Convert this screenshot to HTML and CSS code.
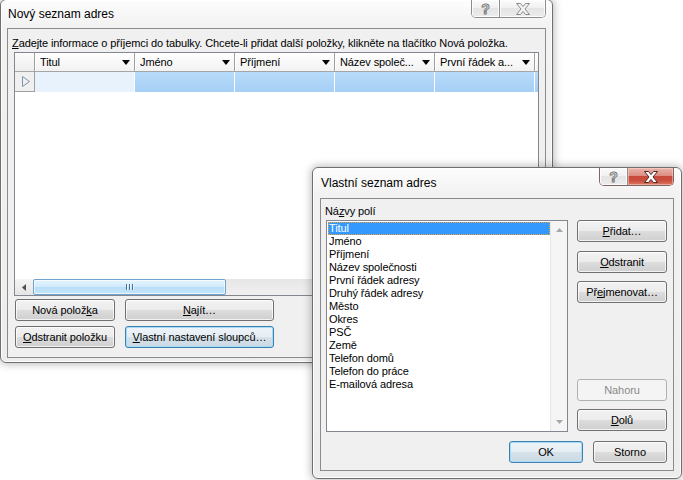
FILE: index.html
```html
<!DOCTYPE html>
<html lang="cs">
<head>
<meta charset="utf-8">
<title>Nový seznam adres</title>
<link rel="stylesheet" href="styles.css">
</head>
<body>
<div class="desk">
  <section class="win win1">
    <div class="cap">
      <span class="cap-title">Nový seznam adres</span>
      <div class="capbtns">
        <span class="cb cb-help">?</span>
        <span class="cb cb-close"><svg width="14" height="12" viewBox="0 0 14 12"><path d="M0.5 0.5H4.5L7 3.6L9.5 0.5H13.5L9 6L13.5 11.5H9.5L7 8.4L4.5 11.5H0.5L5 6Z"/></svg></span>
      </div>
    </div>
    <div class="client c1">
      <p class="hint"><u>Z</u>adejte informace o příjemci do tabulky. Chcete-li přidat další položky, klikněte na tlačítko Nová položka.</p>
      <div class="grid">
        <div class="grow ghead">
          <div class="rh"></div>
          <div class="hc"><span>Titul</span><i class="dd"></i></div>
          <div class="hc"><span>Jméno</span><i class="dd"></i></div>
          <div class="hc"><span>Příjmení</span><i class="dd"></i></div>
          <div class="hc"><span>Název společ...</span><i class="dd"></i></div>
          <div class="hc"><span>První řádek a...</span><i class="dd"></i></div>
          <div class="hc"></div>
        </div>
        <div class="grow gdata">
          <div class="rh"><svg width="10" height="11" viewBox="0 0 10 11"><path d="M1.5 0.5V10.5L8.5 5.5Z"/></svg></div>
          <div class="dc cur"></div>
          <div class="dc"></div>
          <div class="dc"></div>
          <div class="dc"></div>
          <div class="dc"></div>
          <div class="dc"></div>
        </div>
        <div class="gempty"></div>
        <div class="hscroll">
          <span class="sb-arrow"><svg width="5" height="7" viewBox="0 0 5 7"><path d="M4 0V7L0 3.5Z"/></svg></span>
          <span class="sb-thumb"><i></i><i></i><i></i></span>
          <span class="sb-track"></span>
        </div>
      </div>
      <div class="btns1">
        <div class="btn">Nová polož<u>k</u>a</div>
        <div class="btn"><u>N</u>ajít…</div>
        <div class="btn"><u>O</u>dstranit položku</div>
        <div class="btn focus"><u>V</u>lastní nastavení sloupců…</div>
      </div>
    </div>
  </section>

  <section class="win win2">
    <div class="cap">
      <span class="cap-title">Vlastní seznam adres</span>
      <div class="capbtns">
        <span class="cb cb-help">?</span>
        <span class="cb cb-close red"><svg width="14" height="12" viewBox="0 0 14 12"><path d="M0.5 0.5H4.5L7 3.6L9.5 0.5H13.5L9 6L13.5 11.5H9.5L7 8.4L4.5 11.5H0.5L5 6Z"/></svg></span>
      </div>
    </div>
    <div class="client c2">
      <div class="lbl">Ná<u>z</u>vy polí</div>
      <div class="lb">
        <div class="lb-items">
          <div class="lb-item sel">Titul</div>
          <div class="lb-item">Jméno</div>
          <div class="lb-item">Příjmení</div>
          <div class="lb-item">Název společnosti</div>
          <div class="lb-item">První řádek adresy</div>
          <div class="lb-item">Druhý řádek adresy</div>
          <div class="lb-item">Město</div>
          <div class="lb-item">Okres</div>
          <div class="lb-item">PSČ</div>
          <div class="lb-item">Země</div>
          <div class="lb-item">Telefon domů</div>
          <div class="lb-item">Telefon do práce</div>
          <div class="lb-item">E-mailová adresa</div>
        </div>
        <div class="lb-sb">
          <svg width="7" height="4" viewBox="0 0 7 4"><path d="M0 4H7L3.5 0Z"/></svg>
          <svg width="7" height="4" viewBox="0 0 7 4"><path d="M0 0H7L3.5 4Z"/></svg>
        </div>
      </div>
      <div class="rbtns">
        <div class="btn"><u>P</u>řidat…</div>
        <div class="btn b-odst"><u>O</u>dstranit</div>
        <div class="btn b-prej">Př<u>e</u>jmenovat…</div>
        <div class="btn disabled b-nah">Nahoru</div>
        <div class="btn b-dol"><u>D</u>olů</div>
      </div>
      <div class="okrow">
        <div class="btn focus">OK</div>
        <div class="btn">Storno</div>
      </div>
    </div>
  </section>
</div>
</body>
</html>
```

FILE: styles.css
```css
* { box-sizing: border-box; margin: 0; padding: 0; }
html, body { width: 683px; height: 480px; overflow: hidden; background: #fff; }
body {
  font-family: "Liberation Sans", Arial, sans-serif;
  font-size: 11px;
  letter-spacing: -0.1px;
  line-height: 13px;
  color: #000;
}
u { text-decoration: underline; text-underline-offset: 1px; }

.desk { position: relative; width: 683px; height: 480px; overflow: hidden; background: #fff; }

/* windows on the desktop */
.win {
  position: absolute;
  display: flex;
  flex-direction: column;
  border: 1px solid #6f6f6f;
  border-radius: 6px;
  background: linear-gradient(#fdfdfd 0, #f2f2f2 26px, #ededed 100%);
  box-shadow: 0 0 9px 1px rgba(0, 0, 0, .28), inset 0 0 0 1px rgba(255, 255, 255, .85);
}
.win1 { left: 0; top: -1px; width: 553px; height: 364px; padding: 0 6px 4px; }
.win2 { left: 312px; top: 167px; width: 370px; height: 312px; padding: 0 7px 7px; }

.cap { display: flex; align-items: flex-start; flex: none; }
.win1 .cap { height: 28px; }
.win2 .cap { height: 30px; }
.cap-title { font-size: 12px; letter-spacing: 0; padding-left: 1px; white-space: nowrap; }
.win1 .cap-title { line-height: 29px; }
.win2 .cap-title { line-height: 30px; }

.capbtns {
  margin-left: auto;
  display: flex;
  height: 18px;
  border: 1px solid #8d8d8d;
  border-top: none;
  border-radius: 0 0 5px 5px;
  overflow: hidden;
}
.cb {
  display: flex;
  align-items: center;
  justify-content: center;
  background: linear-gradient(#fbfbfb, #f0f0f0 50%, #e4e4e4 50%, #ececec);
  box-shadow: inset 0 0 0 1px rgba(255, 255, 255, .8);
}
.cb-help {
  width: 27px;
  font: bold 14px "Liberation Sans", Arial, sans-serif;
  letter-spacing: 0;
  color: #fdfdfd;
  -webkit-text-stroke: 1px #7c7c7c;
  padding-top: 1px;
}
.cb-close { width: 46px; border-left: 1px solid #8d8d8d; }
.cb-close svg path { fill: #f4f4f4; stroke: #8a8a8a; stroke-width: 1; }
.cb-close.red {
  background: linear-gradient(#eab4ab 0, #dd8d82 45%, #c84a3d 50%, #c9503f 75%, #de7a66 100%);
  box-shadow: inset 0 0 0 1px rgba(255, 220, 210, .5);
}
.cb-close.red svg path { fill: #fff; stroke: #4a2a26; }
.win2 .capbtns { border-color: #7e6664; }

/* client areas */
.client {
  flex: 1;
  background: #f0f0f0;
  border: 1px solid #8b8b8b;
}
.c1 { display: flex; flex-direction: column; padding: 8px 6px 9px; }
.hint { margin: 0 0 2px -2px; white-space: nowrap; height: 13px; }

/* data grid */
.grid {
  height: 244px;
  flex: none;
  border: 1px solid #828790;
  background: #fff;
  display: flex;
  flex-direction: column;
  overflow: hidden;
}
.grow { display: flex; flex: none; }
.ghead { height: 19px; border-bottom: 1px solid #a5a5a5; }
.rh { width: 20px; flex: none; border-right: 1px solid #a0a0a0; background: linear-gradient(#fcfcfc, #eeeeee); }
.hc {
  width: 100px;
  flex: none;
  display: flex;
  align-items: center;
  justify-content: space-between;
  padding: 0 4px 0 5px;
  border-right: 1px solid #a0a0a0;
  box-shadow: inset 1px 0 0 #fff;
  background: linear-gradient(#ffffff, #f2f2f2);
  white-space: nowrap;
}
.hc span { overflow: hidden; }
.dd {
  width: 0;
  height: 0;
  flex: none;
  border-left: 4.5px solid transparent;
  border-right: 4.5px solid transparent;
  border-top: 5px solid #000;
  margin-top: 1px;
}
.gdata { height: 20px; }
.gdata .rh {
  display: flex;
  align-items: center;
  justify-content: center;
  padding-left: 3px;
  background: #f0f0f0;
  border-bottom: 1px solid #a0a0a0;
}
.gdata .rh path { fill: none; stroke: #7e93ab; stroke-width: 1; }
.dc { width: 100px; flex: none; border-right: 1px solid #fff; background: linear-gradient(#b7dbfa, #a6cff5); }
.dc.cur { background: #e8f2fc; }
.gempty { flex: 1; }

.hscroll { height: 16px; flex: none; display: flex; background: #ececec; }
.sb-arrow {
  width: 18px;
  flex: none;
  display: flex;
  align-items: center;
  justify-content: center;
  background: linear-gradient(#f4f4f4, #e6e6e6);
}
.sb-arrow path { fill: #505050; }
.sb-thumb {
  width: 193px;
  flex: none;
  display: flex;
  align-items: center;
  justify-content: center;
  gap: 1px;
  border: 1px solid #6fa3cd;
  border-radius: 2px;
  background: linear-gradient(#e7f5fd, #cfe9fa 50%, #b8def7 50%, #c6e5f9);
  box-shadow: inset 0 0 0 1px rgba(255, 255, 255, .6);
}
.sb-thumb i { display: block; width: 1px; height: 6px; background: #49729a; box-shadow: 1px 0 0 #e8f4fc; margin: 0 1px 0 0; }
.sb-track { flex: 1; background: linear-gradient(#e6e6e6, #f0f0f0); }

/* buttons */
.btn {
  height: 22px;
  display: flex;
  align-items: center;
  justify-content: center;
  border: 1px solid #707070;
  border-radius: 3px;
  background: linear-gradient(#f2f2f2, #ebebeb 50%, #dddddd 50%, #cfcfcf);
  box-shadow: inset 0 0 0 1px rgba(255, 255, 255, .75);
  white-space: nowrap;
}
.btn.focus {
  border-color: #3c7fb1;
  box-shadow: inset 0 0 0 1px #a6dcf8;
  background: linear-gradient(#eef4f8, #e6eef3 50%, #d6e2ea 50%, #cbd9e3);
}
.btn.disabled {
  border-color: #adb2b5;
  background: #f4f4f4;
  box-shadow: none;
  color: #8a8a8a;
}
.btns1 {
  display: grid;
  grid-template-columns: 100px 149px;
  column-gap: 10px;
  row-gap: 5px;
  margin: 3px 0 0 1px;
}

/* dialog 2 */
.c2 {
  display: grid;
  grid-template-columns: 242px 90px;
  grid-template-rows: 13px 212px 22px;
  column-gap: 9px;
  padding: 6px 6px 0 5px;
}
.lbl { grid-column: 1 / 3; margin-left: -1px; white-space: nowrap; }
.lb {
  grid-row: 2;
  margin-top: 2px;
  height: 212px;
  border: 1px solid #828790;
  background: #fff;
  display: flex;
}
.lb-items { flex: 1; padding: 1px 0 0 1px; }
.lb-item { height: 13px; line-height: 13px; padding-left: 1px; white-space: nowrap; }
.lb-item.sel { background: #3399ff; color: #fff; outline: 1px dotted #f1a03a; outline-offset: -1px; }
.lb-sb {
  width: 17px;
  flex: none;
  display: flex;
  flex-direction: column;
  justify-content: space-between;
  align-items: center;
  padding: 7px 0 7px;
  background: #f5f5f5;
  border-left: 1px solid #e6e6e6;
}
.lb-sb path { fill: #a8a8a8; }

.rbtns { grid-row: 2; margin-top: 2px; height: 212px; display: flex; flex-direction: column; }
.b-odst { margin-top: 9px; }
.b-prej { margin-top: 8px; }
.b-nah { margin-top: auto; }
.b-dol { margin-top: 8px; margin-bottom: 1px; }

.okrow {
  grid-column: 1 / 3;
  grid-row: 3;
  margin-top: 11px;
  justify-self: end;
  display: flex;
  gap: 10px;
}
.okrow .btn { width: 74px; }
```
